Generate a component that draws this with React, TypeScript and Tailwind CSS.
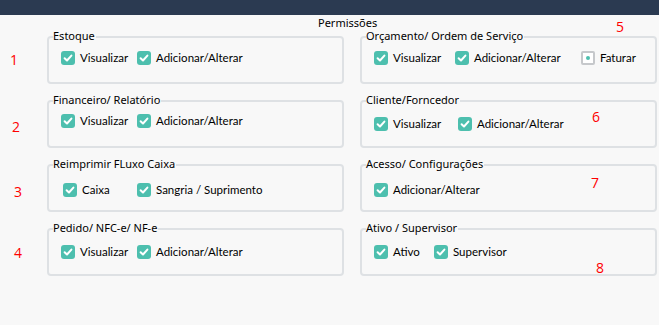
import React from "react";

const FONT = { fontFamily: '"Noto Sans", "Open Sans", sans-serif' };
const LABEL = { fontFamily: 'Lato, "Noto Sans", sans-serif' };

function Check() {
  return (
    <span className="flex h-[14px] w-[14px] shrink-0 items-center justify-center rounded-[3px] bg-[#4dbfae]">
      <svg width="10" height="10" viewBox="0 0 10 10" fill="none">
        <path d="M1.6 5.2 L4 7.5 L8.4 2.6" stroke="white" strokeWidth="2" strokeLinecap="round" strokeLinejoin="round" />
      </svg>
    </span>
  );
}

function Indeterminate() {
  return (
    <span className="flex h-[14px] w-[14px] shrink-0 items-center justify-center rounded-[2px] border-2 border-[#c6c8cb] bg-white">
      <span className="h-[4px] w-[4px] rounded-full bg-[#4dbfae]" />
    </span>
  );
}

type Item = { label: string; w?: string; state?: "check" | "ind" };

function Option({ item }: { item: Item }) {
  return (
    <div className={`flex items-center gap-[5px] ${item.w ?? ""}`}>
      {item.state === "ind" ? <Indeterminate /> : <Check />}
      <span className="text-[11.5px] leading-[14px] text-black" style={LABEL}>
        {item.label}
      </span>
    </div>
  );
}

function Group({ title, items, pt, pl }: { title: string; items: Item[]; pt: string; pl: string }) {
  return (
    <div className={`relative h-[48px] rounded-[4px] border-2 border-[#dee1e4] ${pt} ${pl}`}>
      <span className="absolute -top-[9px] left-[4px] bg-[#f8f8f8] pr-[1px] text-[11px] leading-[14px] text-black">
        {title}
      </span>
      <div className="flex items-center">
        {items.map((it, i) => (
          <Option key={i} item={it} />
        ))}
      </div>
    </div>
  );
}

function Num({ n, cls }: { n: string; cls: string }) {
  return (
    <span
      className={`absolute text-[14px] leading-[14px] text-[#ff0000] ${cls}`}
      style={{ fontFamily: '"Open Sans", sans-serif', fontWeight: 400 }}
    >
      {n}
    </span>
  );
}

export default function App() {
  return (
    <div className="relative h-[325px] w-[659px] overflow-hidden bg-[#f8f8f8]" style={FONT}>
      <div className="h-[15px] bg-[#2b3a51]" />
      <div className="h-[21px] pl-[318px] pt-[1px] text-[11px] leading-[14px] text-black">Permissões</div>
      <div className="grid grid-cols-[297px_297px] gap-x-[16px] gap-y-[16px] pl-[47px]">
        <Group
          title="Estoque"
          pt="pt-[13px]"
          pl="pl-[12px]"
          items={[{ label: "Visualizar", w: "w-[76px]" }, { label: "Adicionar/Alterar" }]}
        />
        <Group
          title="Orçamento/ Ordem de Serviço"
          pt="pt-[13px]"
          pl="pl-[12px]"
          items={[
            { label: "Visualizar", w: "w-[81px]" },
            { label: "Adicionar/Alterar", w: "w-[126px]" },
            { label: "Faturar", state: "ind" },
          ]}
        />
        <Group
          title="Financeiro/ Relatório"
          pt="pt-[12px]"
          pl="pl-[12px]"
          items={[{ label: "Visualizar", w: "w-[76px]" }, { label: "Adicionar/Alterar" }]}
        />
        <Group
          title="Cliente/Forncedor"
          pt="pt-[15px]"
          pl="pl-[12px]"
          items={[{ label: "Visualizar", w: "w-[84px]" }, { label: "Adicionar/Alterar" }]}
        />
        <Group
          title="Reimprimir FLuxo Caixa"
          pt="pt-[17px]"
          pl="pl-[14px]"
          items={[{ label: "Caixa", w: "w-[74px]" }, { label: "Sangria / Suprimento" }]}
        />
        <Group title="Acesso/ Configurações" pt="pt-[17px]" pl="pl-[12px]" items={[{ label: "Adicionar/Alterar" }]} />
        <Group
          title="Pedido/ NFC-e/ NF-e"
          pt="pt-[15px]"
          pl="pl-[12px]"
          items={[{ label: "Visualizar", w: "w-[76px]" }, { label: "Adicionar/Alterar" }]}
        />
        <Group
          title="Ativo / Supervisor"
          pt="pt-[15px]"
          pl="pl-[12px]"
          items={[{ label: "Ativo", w: "w-[60px]" }, { label: "Supervisor" }]}
        />
      </div>
      <Num n="1" cls="left-[10px] top-[53px]" />
      <Num n="2" cls="left-[12px] top-[120px]" />
      <Num n="3" cls="left-[14px] top-[185px]" />
      <Num n="4" cls="left-[14px] top-[246px]" />
      <Num n="5" cls="left-[616px] top-[20px]" />
      <Num n="6" cls="left-[592px] top-[110px]" />
      <Num n="7" cls="left-[591px] top-[176px]" />
      <Num n="8" cls="left-[596px] top-[261px]" />
    </div>
  );
}
